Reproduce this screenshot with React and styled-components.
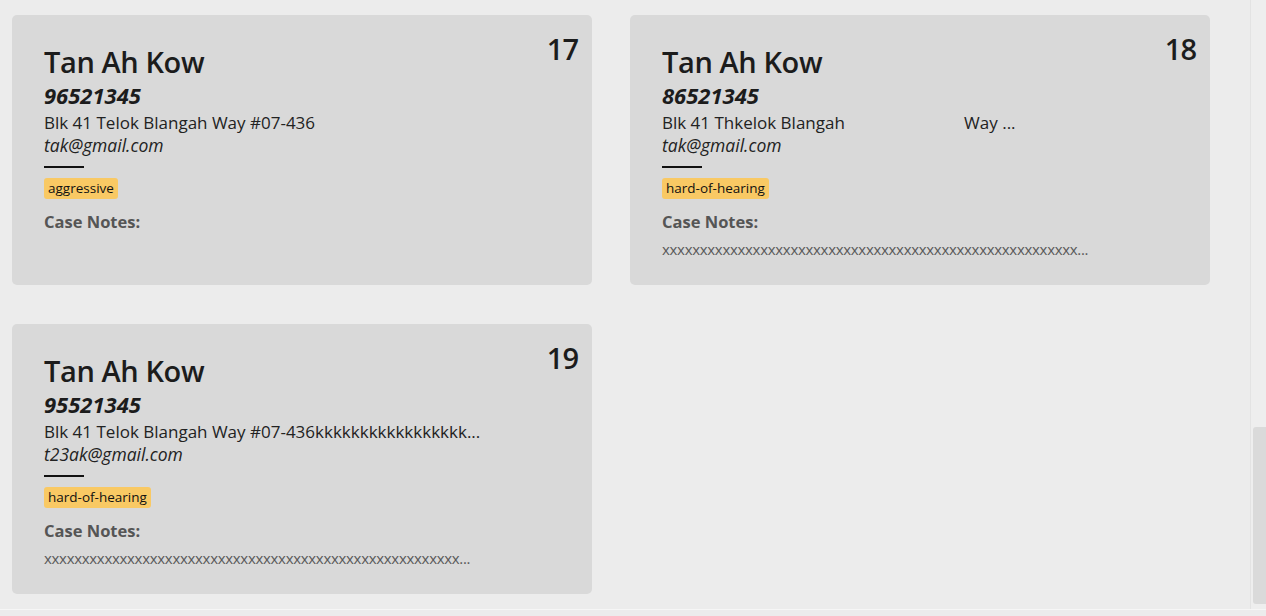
import React from 'react'
import styled, { createGlobalStyle } from 'styled-components'

const GlobalStyle = createGlobalStyle`
html, body {
    margin: 0;
    padding: 0;
    background-color: #ececec;
    overflow: hidden;
}
body {
    font-family: "Open Sans", "Noto Sans", sans-serif;
}
`

const persons = [
    {
        index: 17,
        name: 'Tan Ah Kow',
        phone: '96521345',
        address: 'Blk 41 Telok Blangah Way #07-436',
        email: 'tak@gmail.com',
        tags: ['aggressive'],
        notes: '',
    },
    {
        index: 18,
        name: 'Tan Ah Kow',
        phone: '86521345',
        address: 'Blk 41 Thkelok Blangah' + ' '.repeat(27) + 'Way ...',
        email: 'tak@gmail.com',
        tags: ['hard-of-hearing'],
        notes: 'x'.repeat(55) + '...',
    },
    {
        index: 19,
        name: 'Tan Ah Kow',
        phone: '95521345',
        address: 'Blk 41 Telok Blangah Way #07-436' + 'k'.repeat(17) + '...',
        email: 't23ak@gmail.com',
        tags: ['hard-of-hearing'],
        notes: 'x'.repeat(55) + '...',
    },
]

function PersonCard({ person }) {
    return (
        <Card>
            <CardBody>
                <Name>{person.name}</Name>
                <Phone>{person.phone}</Phone>
                <Address>{person.address}</Address>
                <Email>{person.email}</Email>
                <Divider />
                <Tags>
                    {person.tags.map((t) => (
                        <Tag key={t}>{t}</Tag>
                    ))}
                </Tags>
                <NotesLabel>Case Notes:</NotesLabel>
                {person.notes && <Notes>{person.notes}</Notes>}
            </CardBody>
            <Index>{person.index}</Index>
        </Card>
    )
}

function App() {
    return (
        <Page>
            <GlobalStyle />
            <Main>
                <ListArea>
                    {persons.map((p) => (
                        <PersonCard key={p.index} person={p} />
                    ))}
                </ListArea>
                <ScrollTrack>
                    <ScrollThumb />
                </ScrollTrack>
            </Main>
            <BottomStrip />
        </Page>
    )
}

export default App

const Page = styled.div`
display: flex;
flex-direction: column;
width: 1266px;
height: 616px;
background-color: #ececec;
`

const Main = styled.div`
display: flex;
height: 609px;
`

const ListArea = styled.div`
flex: 1;
display: grid;
grid-template-columns: 580px 580px;
grid-auto-rows: 270px;
column-gap: 38px;
row-gap: 39px;
padding: 15px 0 0 12px;
align-content: start;
`

const ScrollTrack = styled.div`
width: 15px;
border-left: 1px solid #e3e3e3;
background-color: #eeeeee;
display: flex;
flex-direction: column;
justify-content: flex-end;
align-items: flex-end;
padding-bottom: 5px;
`

const ScrollThumb = styled.div`
width: 13px;
height: 177px;
background-color: #dadada;
border-radius: 3px 0 0 3px;
`

const BottomStrip = styled.div`
flex: 1;
border-top: 1px solid #f6f6f6;
`

const Card = styled.div`
display: flex;
align-items: flex-start;
background-color: #d9d9d9;
border-radius: 5px;
padding: 16px 14px 0 32px;
box-sizing: border-box;
overflow: hidden;
`

const CardBody = styled.div`
flex: 1;
min-width: 0;
padding-top: 13px;
display: flex;
flex-direction: column;
align-items: flex-start;
`

const Index = styled.div`
font-size: 29px;
line-height: 36px;
font-weight: 600;
letter-spacing: -1px;
color: #1c1c1c;
`

const Name = styled.div`
font-size: 29px;
line-height: 36px;
font-weight: 600;
letter-spacing: -0.4px;
color: #1c1c1c;
`

const Phone = styled.div`
font-size: 22px;
line-height: 31px;
font-weight: 700;
font-style: italic;
color: #1c1c1c;
`

const Address = styled.div`
font-size: 17px;
line-height: 24px;
color: #222;
white-space: pre;
`

const Email = styled.div`
font-size: 17.5px;
line-height: 20px;
font-style: italic;
color: #222;
`

const Divider = styled.div`
width: 40px;
height: 2px;
margin-top: 11px;
background-color: #111;
`

const Tags = styled.div`
display: flex;
gap: 6px;
margin-top: 10px;
`

const Tag = styled.span`
display: inline-block;
font-size: 13.5px;
line-height: 21px;
padding: 0 4px;
background-color: #f9c964;
color: #111;
border-radius: 3px;
`

const NotesLabel = styled.div`
margin-top: 12px;
font-size: 16.5px;
line-height: 22px;
font-weight: 700;
color: #555;
`

const Notes = styled.div`
margin-top: 6px;
font-size: 15px;
line-height: 20px;
letter-spacing: -0.3px;
color: #5a5a5a;
white-space: nowrap;
`
